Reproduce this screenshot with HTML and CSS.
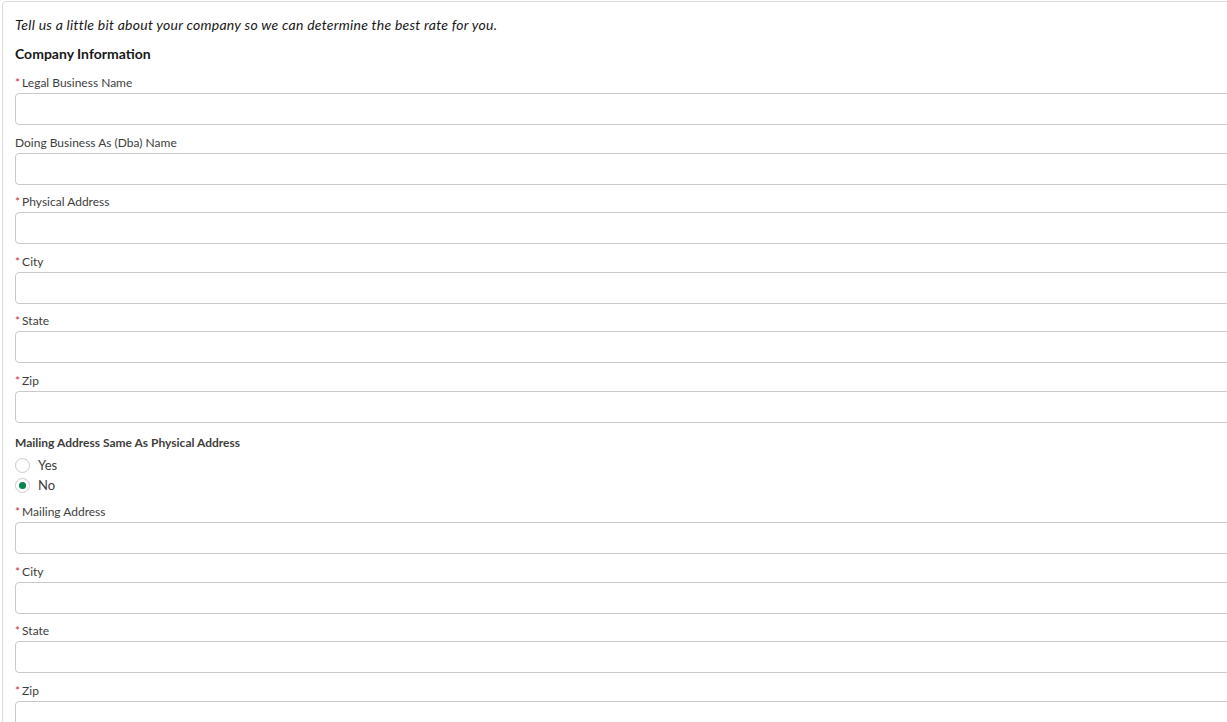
FILE: index.html
```html
<!DOCTYPE html>
<html lang="en">
<head>
    <meta charset="UTF-8">
    <title>Company Information</title>
    <link rel="stylesheet" href="styles.css">
</head>
<body>
    <div class="card">
        <p class="intro">Tell us a little bit about your company so we can determine the best rate for you.</p>
        <h2 class="section-title">Company Information</h2>
        <form class="form">
            <div class="field">
                <label class="field-label"><abbr class="req">*</abbr>Legal Business Name</label>
                <input class="input" type="text">
            </div>
            <div class="field">
                <label class="field-label">Doing Business As (Dba) Name</label>
                <input class="input" type="text">
            </div>
            <div class="field">
                <label class="field-label"><abbr class="req">*</abbr>Physical Address</label>
                <input class="input" type="text">
            </div>
            <div class="field">
                <label class="field-label"><abbr class="req">*</abbr>City</label>
                <input class="input" type="text">
            </div>
            <div class="field">
                <label class="field-label"><abbr class="req">*</abbr>State</label>
                <input class="input" type="text">
            </div>
            <div class="field">
                <label class="field-label"><abbr class="req">*</abbr>Zip</label>
                <input class="input" type="text">
            </div>
            <div class="radio-group" role="radiogroup">
                <div class="group-label">Mailing Address Same As Physical Address</div>
                <label class="radio"><span class="radio-dot"></span>Yes</label>
                <label class="radio"><span class="radio-dot checked"></span>No</label>
            </div>
            <div class="field">
                <label class="field-label"><abbr class="req">*</abbr>Mailing Address</label>
                <input class="input" type="text">
            </div>
            <div class="field">
                <label class="field-label"><abbr class="req">*</abbr>City</label>
                <input class="input" type="text">
            </div>
            <div class="field">
                <label class="field-label"><abbr class="req">*</abbr>State</label>
                <input class="input" type="text">
            </div>
            <div class="field">
                <label class="field-label"><abbr class="req">*</abbr>Zip</label>
                <input class="input" type="text">
            </div>
        </form>
    </div>
</body>
</html>
```

FILE: styles.css
```css
body { margin: 0; font-family: Lato, "Noto Sans", sans-serif; color: #181818; background: #fff; overflow: hidden; }
.card { margin: 1px 0 0 2px; width: 1260px; border: 1px solid #dddbda; border-radius: 4px; padding: 13px 0 0 12px; box-sizing: border-box; }
.intro { margin: 0; font-size: 14px; letter-spacing: 0.25px; font-style: italic; line-height: 20px; }
.section-title { margin: 9px 0 0; font-size: 14px; font-weight: 700; line-height: 20px; }
.form { margin-top: 10px; }
.field { margin-bottom: 8.5px; }
.field-label { display: block; font-size: 12px; line-height: 18px; color: #3e3e3c; margin-bottom: 1px; }
.req { color: #c23934; text-decoration: none; margin-right: 2px; font-size: 12px; }
.input { display: block; width: 100%; height: 32px; box-sizing: border-box; border: 1px solid #c9c9c9; border-radius: 4px; background: #fff; padding: 0 12px; font-family: inherit; font-size: 13px; }
.radio-group { padding-top: 3px; margin-bottom: 8px; }
.group-label { font-size: 12px; font-weight: 700; line-height: 18px; color: #3e3e3c; margin-bottom: 3px; }
.radio { display: flex; align-items: center; height: 20px; font-size: 13px; color: #3e3e3c; }
.radio-dot { width: 15px; height: 15px; border: 1px solid #c9c9c9; border-radius: 50%; box-sizing: border-box; margin-right: 8px; display: flex; align-items: center; justify-content: center; background: #fff; }
.radio-dot.checked::after { content: ""; width: 7px; height: 7px; border-radius: 50%; background: #04844b; }
```
